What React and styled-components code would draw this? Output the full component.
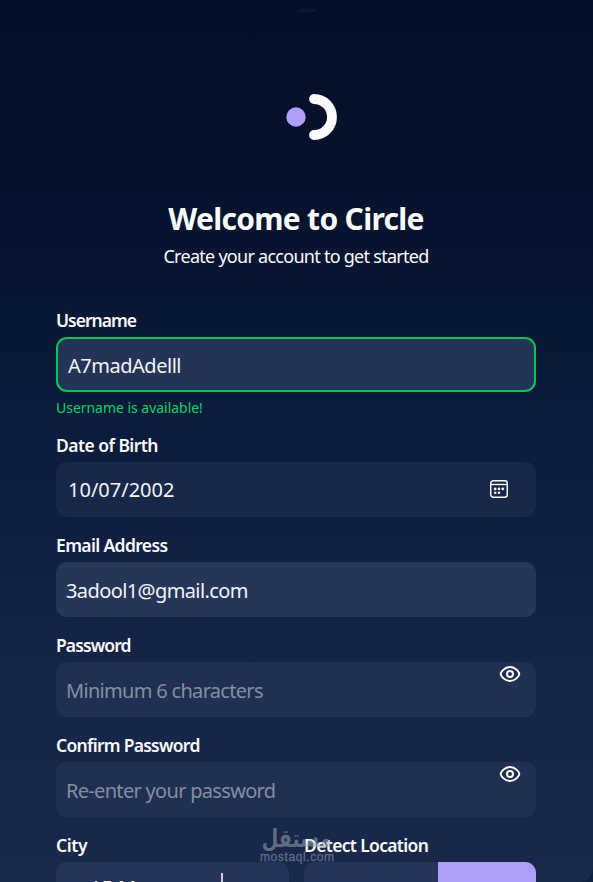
import React, { useState } from 'react';
import styled, { createGlobalStyle } from 'styled-components';

const GlobalStyles = createGlobalStyle`
  * {
    box-sizing: border-box;
  }

  body {
    margin: 0;
    background: #101f3e;
    font-family: 'Noto Sans', 'Open Sans', sans-serif;
    color: #fcfcfc;
  }
`;

const Page = styled.main`
  position: relative;
  height: 882px;
  overflow: hidden;
  padding: 94px 57px 0 56px;
  background: linear-gradient(180deg, #040f28 0%, #05122c 20%, #0a1a3a 45%, #0e1f42 62%, #142548 76%, #18294b 100%);
  border-radius: 0 0 14px 0;
`;

const Notch = styled.span`
  position: absolute;
  top: 9px;
  left: 298px;
  width: 18px;
  height: 3px;
  border-radius: 2px;
  background: #0b1832;
`;

const Logo = styled.svg`
  display: block;
  width: 52px;
  height: 46px;
  margin: 0 0 0 230px;
`;

const Title = styled.h1`
  margin: 57px 0 0;
  height: 44px;
  line-height: 44px;
  font-size: 30px;
  font-weight: 700;
  letter-spacing: -0.7px;
  text-align: center;
  white-space: nowrap;
`;

const Subtitle = styled.p`
  margin: 3px 0 0;
  height: 24px;
  line-height: 24px;
  font-size: 18px;
  letter-spacing: -0.73px;
  text-align: center;
  white-space: nowrap;
`;

const Form = styled.form`
  margin-top: 41px;
  display: flex;
  flex-direction: column;
`;

const Field = styled.div`
  position: relative;
  flex: none;
  height: ${(props) => props.$height || '100px'};
`;

const Label = styled.label`
  display: block;
  height: 28px;
  line-height: 22px;
  font-size: 17.5px;
  font-weight: 600;
  letter-spacing: ${(props) => props.$track || '-0.4px'};
  white-space: nowrap;
`;

const Input = styled.input`
  display: block;
  width: 100%;
  height: 55px;
  padding: ${(props) => props.$drop || '1px'} 10px 0 ${(props) => props.$inset || '8px'};
  border: 2px solid ${(props) => (props.$valid ? '#00c951' : 'transparent')};
  border-radius: 11px;
  outline: none;
  background: ${(props) => props.$fill || '#203052'};
  font-family: inherit;
  font-size: 20px;
  letter-spacing: ${(props) => props.$track || '0'};
  color: #f4f5f7;

  &::placeholder {
    color: #858e9f;
    opacity: 1;
  }
`;

const Hint = styled.p`
  margin: 6px 0 0;
  line-height: 20px;
  font-size: 14px;
  letter-spacing: -0.03px;
  color: #00d560;
`;

const IconButton = styled.button`
  position: absolute;
  top: ${(props) => props.$top};
  right: ${(props) => props.$right};
  display: flex;
  padding: 0;
  border: 0;
  background: none;
  color: #fcfcfc;
`;

const Columns = styled.div`
  display: grid;
  grid-template-columns: 233px 232px;
  gap: 15px;
`;

const CityBox = styled.div`
  display: flex;
  justify-content: space-between;
  height: 55px;
  padding: 11px 66px 0 34px;
  border-radius: 11px;
  background: #243559;
  font-size: 20px;
  line-height: 29px;
`;

const Separator = styled.span`
  width: 2px;
  height: 32px;
  background: #c9ced8;
`;

const DetectBox = styled.div`
  display: flex;
  justify-content: flex-end;
  height: 55px;
  overflow: hidden;
  border-radius: 11px;
  background: #243559;
`;

const DetectButton = styled.button`
  width: 98px;
  border: 0;
  background: #ac9ffa;
`;

const Watermark = styled.div`
  position: absolute;
  top: 827px;
  left: 260px;
  width: 73px;
  color: #a3a9b4;
  opacity: 0.52;
  pointer-events: none;
`;

const WatermarkName = styled.div`
  display: flex;
  justify-content: center;
  height: 23px;
  line-height: 23px;
  font-family: 'DejaVu Sans', sans-serif;
  font-size: 25px;
  font-weight: 700;
  direction: rtl;
  white-space: nowrap;
  transform: scaleX(0.76);
`;

const WatermarkSite = styled.div`
  height: 14px;
  line-height: 14px;
  font-family: 'Liberation Sans', sans-serif;
  font-size: 12px;
  font-weight: 400;
  letter-spacing: 0.6px;
  -webkit-text-stroke: 0.3px currentColor;
`;

const EyeIcon = () => (
  <svg width="24" height="24" viewBox="0 0 24 24" fill="none" stroke="currentColor">
    <path d="M2.7 12C2.7 10.2 6.3 5.1 12 5.1S21.3 10.2 21.3 12 17.7 18.9 12 18.9 2.7 13.8 2.7 12Z" strokeWidth="2" />
    <circle cx="12" cy="12" r="3" strokeWidth="2" />
  </svg>
);

const CalendarIcon = () => (
  <svg width="18" height="18" viewBox="0 0 18 18">
    <rect x="0.75" y="0.75" width="16.5" height="16.5" rx="2.5" fill="none" stroke="currentColor" strokeWidth="1.4" />
    <path d="M1 4.5h16" stroke="currentColor" strokeWidth="1.4" />
    <g fill="currentColor">
      <circle cx="5.2" cy="8.9" r="1.3" />
      <circle cx="9" cy="8.9" r="1.3" />
      <circle cx="12.8" cy="8.9" r="1.3" />
      <circle cx="5.2" cy="12.7" r="1.3" />
      <circle cx="9" cy="12.7" r="1.3" />
    </g>
  </svg>
);

const PasswordField = ({ id, label, placeholder, labelTrack }) => {
  const [visible, setVisible] = useState(false);

  return (
    <Field>
      <Label htmlFor={id} $track={labelTrack}>{label}</Label>
      <Input id={id} type={visible ? 'text' : 'password'} placeholder={placeholder} $track="-0.69px" />
      <IconButton type="button" $top="28px" $right="14px" onClick={() => setVisible(!visible)}>
        <EyeIcon />
      </IconButton>
    </Field>
  );
};

const App = () => {
  const [username, setUsername] = useState('A7madAdelll');
  const [birth, setBirth] = useState('10/07/2002');
  const [email, setEmail] = useState('3adool1@gmail.com');

  return (
    <>
      <GlobalStyles />
      <Page>
        <Notch />
        <Logo viewBox="0 0 52 46">
          <circle cx="10" cy="23" r="9.7" fill="#ac9ffa" />
          <path d="M28 5a18 18 0 0 1 0 36" fill="none" stroke="#fcfcfc" strokeWidth="9.8" strokeLinecap="round" />
        </Logo>
        <Title>Welcome to Circle</Title>
        <Subtitle>Create your account to get started</Subtitle>
        <Form>
          <Field $height="125px">
            <Label htmlFor="username" $track="-1px">Username</Label>
            <Input id="username" value={username} onChange={(e) => setUsername(e.target.value)} $valid $fill="#243457" $inset="10px" $track="-0.48px" />
            <Hint>Username is available!</Hint>
          </Field>
          <Field>
            <Label htmlFor="birth" $track="-0.55px">Date of Birth</Label>
            <Input id="birth" value={birth} onChange={(e) => setBirth(e.target.value)} $fill="#182849" $inset="10px" $drop="0" />
            <IconButton type="button" $top="46px" $right="28px">
              <CalendarIcon />
            </IconButton>
          </Field>
          <Field>
            <Label htmlFor="email" $track="-0.63px">Email Address</Label>
            <Input id="email" value={email} onChange={(e) => setEmail(e.target.value)} $fill="#253659" $track="-0.6px" />
          </Field>
          <PasswordField id="password" label="Password" placeholder="Minimum 6 characters" labelTrack="-0.9px" />
          <PasswordField id="confirm" label="Confirm Password" placeholder="Re-enter your password" labelTrack="-0.73px" />
          <Columns>
            <Field>
              <Label>City</Label>
              <CityBox>
                <span>15 May</span>
                <Separator />
              </CityBox>
            </Field>
            <Field>
              <Label $track="-0.67px">Detect Location</Label>
              <DetectBox>
                <DetectButton type="button" aria-label="Detect Location" />
              </DetectBox>
            </Field>
          </Columns>
        </Form>
        <Watermark>
          <WatermarkName>مستقل</WatermarkName>
          <WatermarkSite>mostaql.com</WatermarkSite>
        </Watermark>
      </Page>
    </>
  );
};

export default App;
